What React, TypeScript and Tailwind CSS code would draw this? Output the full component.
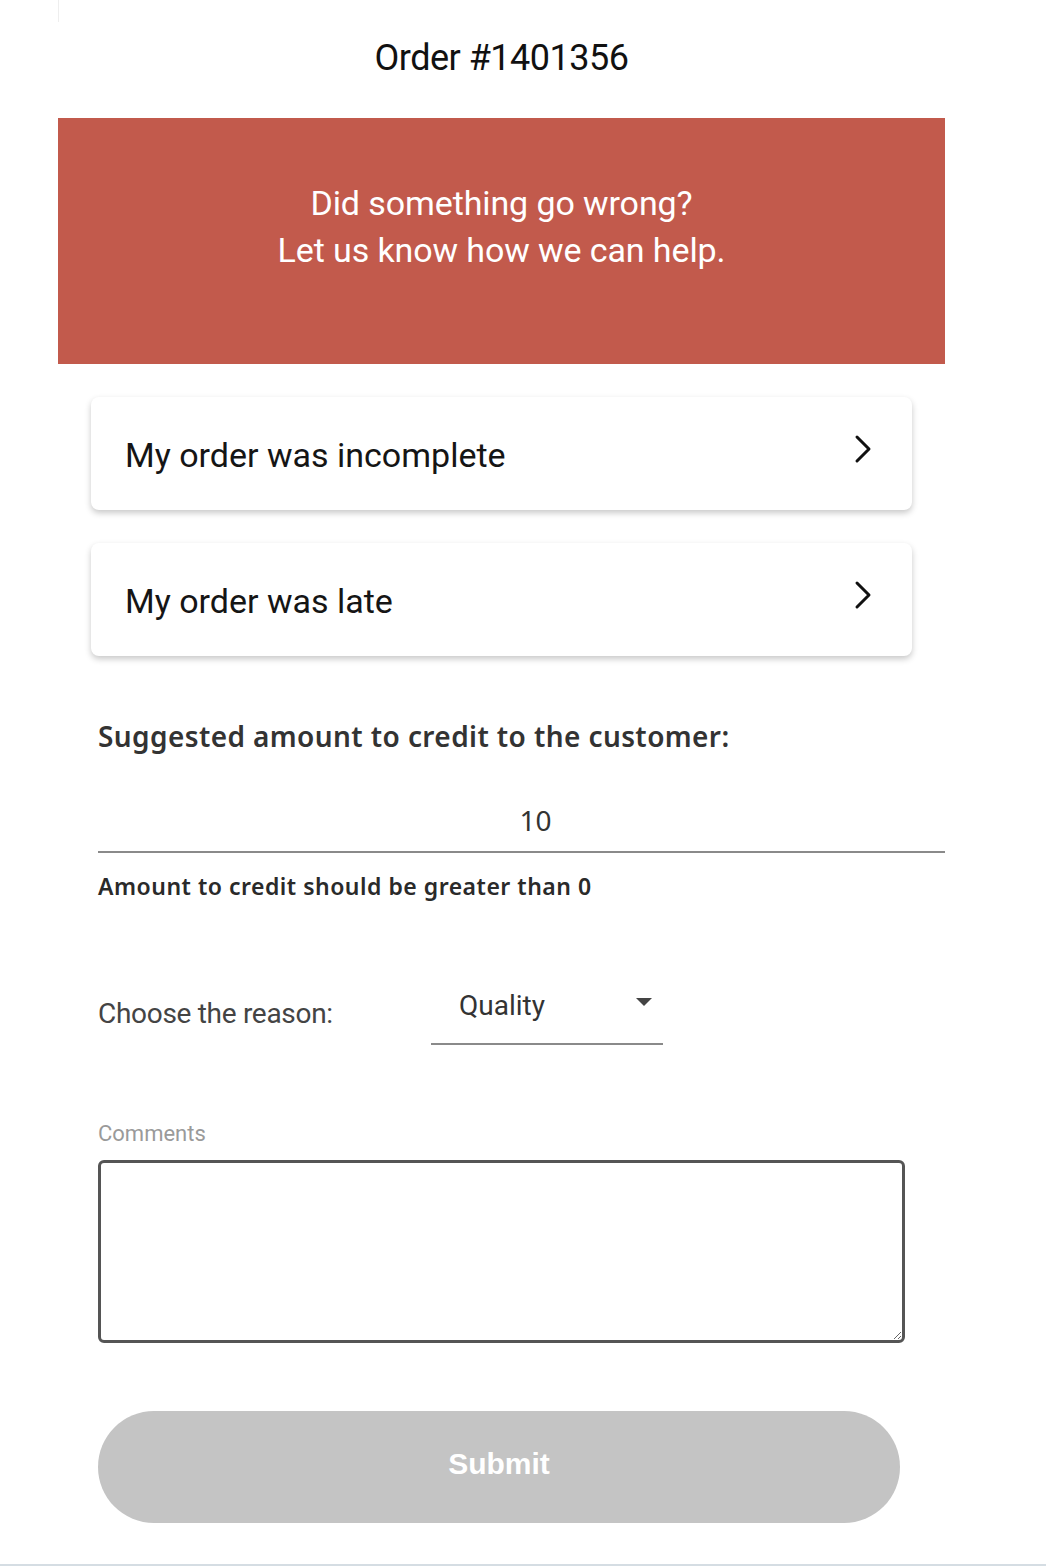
import React from "react";

function Chevron() {
  return (
    <svg width="22" height="34" viewBox="0 0 22 34" fill="none">
      <path d="M5 4 L17 16 L5 28" stroke="#111" strokeWidth="3" strokeLinecap="round" strokeLinejoin="round" />
    </svg>
  );
}

function Card({ label }: { label: string }) {
  return (
    <div className="flex h-[113px] items-center justify-between rounded-[8px] bg-white pl-[34px] pr-[38px] shadow-[0_3px_6px_rgba(0,0,0,0.22)]">
      <span className="mt-[3px] text-[34px] text-[#151515]" style={{ fontFamily: "Roboto, sans-serif" }}>{label}</span>
      <div className="-mt-[8px]"><Chevron /></div>
    </div>
  );
}

export default function App() {
  return (
    <div className="relative min-h-[1568px] w-[1046px] bg-white" style={{ fontFamily: "Roboto, sans-serif" }}>
      <div className="absolute left-[58px] top-0 h-[22px] w-px bg-[#eeeeee]" />
      <div className="mx-[58px] w-[887px]">
        <div className="flex h-[118px] items-center justify-center pb-[2px]">
          <h1 className="text-[36px] text-[#111] tracking-[-0.5px]">Order #1401356</h1>
        </div>
        <div className="flex h-[246px] flex-col items-center bg-[#c25a4c] pt-[62px] text-center text-[34px] leading-[47px] tracking-[-0.1px] text-white">
          <div>Did something go wrong?</div>
          <div>Let us know how we can help.</div>
        </div>
        <div className="flex flex-col gap-[33px] px-[33px] pt-[33px]">
          <Card label="My order was incomplete" />
          <Card label="My order was late" />
        </div>
        <div className="pl-[40px] pt-[59px]">
          <div className="text-[28px] font-semibold text-[#333] tracking-[0.4px]" style={{ fontFamily: "'Noto Sans', sans-serif" }}>
            Suggested amount to credit to the customer:
          </div>
          <div className="mt-[42px] border-b-2 border-[#8a8a8a] pb-[10px] pl-[28px] text-center text-[28px] text-[#333]" style={{ fontFamily: "'Noto Sans', sans-serif" }}>
            10
          </div>
          <div className="mt-[16px] text-[23px] font-semibold text-[#2a2a2a] tracking-[0.5px]" style={{ fontFamily: "'Noto Sans', sans-serif" }}>
            Amount to credit should be greater than 0
          </div>
          <div className="mt-[77px] flex items-start">
            <div className="mt-[12px] w-[333px] text-[28px] text-[#444] tracking-[-0.3px]">Choose the reason:</div>
            <div className="flex h-[64px] w-[232px] items-start justify-between border-b-2 border-[#8a8a8a] pl-[28px] pr-[10px] pt-[4px]">
              <span className="text-[28px] text-[#333]">Quality</span>
              <svg width="18" height="10" viewBox="0 0 18 10" className="mt-[12px]">
                <path d="M1 1 L17 1 L9 9 Z" fill="#444" />
              </svg>
            </div>
          </div>
          <div className="mt-[72px] text-[22px] text-[#9a9a9a]">Comments</div>
          <div className="mt-[10px] w-[807px]">
            <textarea className="block h-[183px] w-full resize-y rounded-[6px] border-[3px] border-[#555] bg-white" />
          </div>
          <button className="mt-[68px] flex h-[112px] w-[802px] items-center justify-center rounded-full bg-[#c4c4c4] pb-[6px] text-[30px] font-bold text-white" style={{ fontFamily: "'Liberation Sans', Arial, sans-serif" }}>
            Submit
          </button>
        </div>
      </div>
      <div className="absolute bottom-[2px] left-0 h-[2px] w-full bg-[#d5dde3]" />
    </div>
  );
}
